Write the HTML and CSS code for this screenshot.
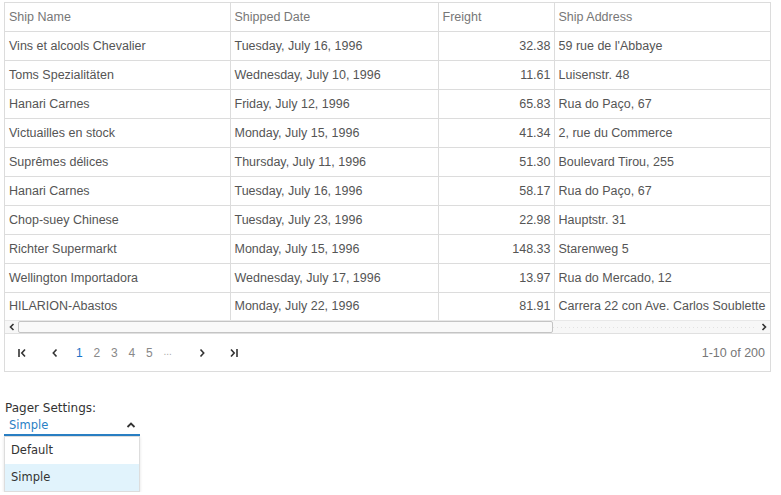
FILE: index.html
```html
<!DOCTYPE html>
<html>
<head>
<meta charset="utf-8">
<link rel="stylesheet" href="styles.css">
</head>
<body>
<div class="grid">
  <div class="scroller">
    <table class="table">
      <colgroup>
        <col class="c1"><col class="c2"><col class="c3"><col class="c4">
      </colgroup>
      <thead>
        <tr><th>Ship Name</th><th>Shipped Date</th><th>Freight</th><th>Ship Address</th></tr>
      </thead>
      <tbody>
        <tr><td>Vins et alcools Chevalier</td><td>Tuesday, July 16, 1996</td><td class="num">32.38</td><td>59 rue de l'Abbaye</td></tr>
        <tr><td>Toms Spezialitäten</td><td>Wednesday, July 10, 1996</td><td class="num">11.61</td><td>Luisenstr. 48</td></tr>
        <tr><td>Hanari Carnes</td><td>Friday, July 12, 1996</td><td class="num">65.83</td><td>Rua do Paço, 67</td></tr>
        <tr><td>Victuailles en stock</td><td>Monday, July 15, 1996</td><td class="num">41.34</td><td>2, rue du Commerce</td></tr>
        <tr><td>Suprêmes délices</td><td>Thursday, July 11, 1996</td><td class="num">51.30</td><td>Boulevard Tirou, 255</td></tr>
        <tr><td>Hanari Carnes</td><td>Tuesday, July 16, 1996</td><td class="num">58.17</td><td>Rua do Paço, 67</td></tr>
        <tr><td>Chop-suey Chinese</td><td>Tuesday, July 23, 1996</td><td class="num">22.98</td><td>Hauptstr. 31</td></tr>
        <tr><td>Richter Supermarkt</td><td>Monday, July 15, 1996</td><td class="num">148.33</td><td>Starenweg 5</td></tr>
        <tr><td>Wellington Importadora</td><td>Wednesday, July 17, 1996</td><td class="num">13.97</td><td>Rua do Mercado, 12</td></tr>
        <tr><td>HILARION-Abastos</td><td>Monday, July 22, 1996</td><td class="num">81.91</td><td>Carrera 22 con Ave. Carlos Soublette</td></tr>
      </tbody>
    </table>
  </div>
  <div class="hscroll">
    <span class="arrow">
      <svg width="8" height="8" viewBox="0 0 8 8"><path d="M5.5 1 L2.5 4 L5.5 7" fill="none" stroke="#333" stroke-width="1.6"/></svg>
    </span>
    <div class="track"><div class="thumb"></div></div>
    <span class="arrow">
      <svg width="8" height="8" viewBox="0 0 8 8"><path d="M2.5 1 L5.5 4 L2.5 7" fill="none" stroke="#333" stroke-width="1.6"/></svg>
    </span>
  </div>
  <div class="pager">
    <div class="nav">
      <span class="btn first"><svg width="12" height="10" viewBox="0 0 12 10"><path d="M2 1 V9" stroke="#333" stroke-width="1.6"/><path d="M8 1.5 L4.8 5 L8 8.5" fill="none" stroke="#333" stroke-width="1.6"/></svg></span>
      <span class="btn prev"><svg width="10" height="10" viewBox="0 0 10 10"><path d="M6.5 1.5 L3.3 5 L6.5 8.5" fill="none" stroke="#333" stroke-width="1.6"/></svg></span>
      <span class="pages">
        <span class="pg active">1</span><span class="pg">2</span><span class="pg">3</span><span class="pg">4</span><span class="pg">5</span><span class="pg dots">...</span>
      </span>
      <span class="btn next"><svg width="10" height="10" viewBox="0 0 10 10"><path d="M3.5 1.5 L6.7 5 L3.5 8.5" fill="none" stroke="#333" stroke-width="1.6"/></svg></span>
      <span class="btn last"><svg width="12" height="10" viewBox="0 0 12 10"><path d="M4 1.5 L7.2 5 L4 8.5" fill="none" stroke="#333" stroke-width="1.6"/><path d="M10 1 V9" stroke="#333" stroke-width="1.6"/></svg></span>
    </div>
    <div class="info">1-10 of 200</div>
  </div>
</div>

<div class="settings">
  <div class="label">Pager Settings:</div>
  <div class="select">
    <span class="value">Simple</span>
    <svg width="10" height="8" viewBox="0 0 10 8"><path d="M1.5 6 L5 2.5 L8.5 6" fill="none" stroke="#333" stroke-width="1.8"/></svg>
  </div>
  <ul class="list">
    <li>Default</li>
    <li class="selected">Simple</li>
  </ul>
</div>
</body>
</html>
```

FILE: styles.css
```css
* { box-sizing: border-box; }
body {
  margin: 0;
  padding: 2px 10px 0 4px;
  background: #fff;
  font-family: "Liberation Sans", Arial, sans-serif;
  font-size: 12.5px;
  color: #555;
}
.grid {
  width: 767px;
  border: 1px solid #dcdcdc;
}
.scroller {
  overflow: hidden;
}
.table {
  border-collapse: collapse;
  table-layout: fixed;
  width: 766px;
}
.c1 { width: 225px; }
.c2 { width: 208px; }
.c3 { width: 116px; }
.c4 { width: 217px; }
.table th, .table td {
  height: 29px;
  padding: 0 4px;
  text-align: left;
  white-space: nowrap;
  overflow: visible;
  border-left: 1px solid #dcdcdc;
  border-bottom: 1px solid #dcdcdc;
}
.table th:first-child, .table td:first-child { border-left: none; }
.table th {
  font-weight: normal;
  color: #777;
  height: 28px;
}
.table td { color: #555; }
.table td.num { text-align: right; padding-right: 3px; }
.table tbody tr:last-child td { border-bottom: none; height: 28px; }

.hscroll {
  display: flex;
  align-items: center;
  height: 14px;
  background: #f7f7f7;
  border-top: 1px solid #e8e8e8;
  border-bottom: 1px solid #e0e0e0;
}
.arrow {
  width: 13px;
  display: flex;
  justify-content: center;
  align-items: center;
}
.track {
  flex: 1;
  height: 12px;
  display: flex;
  background: repeating-linear-gradient(90deg, #f7f7f7 0 3px, #e2e2e2 3px 4px);
  background-size: 100% 1px;
  background-position: 0 50%;
  background-repeat: no-repeat;
}
.thumb {
  width: 535px;
  height: 12px;
  background: #f9f9f9;
  border: 1px solid #c4c4c4;
  border-radius: 2px;
}

.pager {
  height: 37px;
  display: flex;
  align-items: center;
  justify-content: space-between;
  padding: 0 5px 0 12px;
}
.nav {
  display: flex;
  align-items: center;
}
.btn {
  display: inline-flex;
  align-items: center;
  justify-content: center;
}
.first { width: 12px; }
.prev { width: 10px; margin-left: 21px; }
.pages { margin-left: 15px; display: flex; }
.pg { width: 17.5px; text-align: left; color: #888; font-size: 12px; padding-left: 1px;}
.pg.active { color: #1a73c7; }
.pg.dots { color: #aaa; width: 20px; font-size: 10px; }
.next { width: 10px; margin-left: 14px; }
.last { width: 12px; margin-left: 20px; }
.info { color: #777; font-size: 12.5px; }

.settings {
  margin-top: 29px;
  width: 136px;
  font-family: "DejaVu Sans", Verdana, sans-serif;
  font-size: 12px;
}
.label {
  padding-left: 1px;
  color: #333;
  line-height: 14px;
}
.select {
  display: flex;
  align-items: center;
  justify-content: space-between;
  height: 21px;
  padding: 1px 4px 0 5px;
  border-bottom: 2px solid #2a80c5;
  color: #2a80c5;
  font-size: 11.5px;
}
.list {
  list-style: none;
  margin: 0;
  padding: 0;
  border: 1px solid #ddd;
  box-shadow: 0 1px 3px rgba(0,0,0,0.12);
  background: #fff;
}
.list li {
  height: 27px;
  line-height: 27px;
  padding-left: 6px;
  color: #333;
  font-size: 11.5px;
}
.list li.selected {
  background: #e1f3fc;
}
```
